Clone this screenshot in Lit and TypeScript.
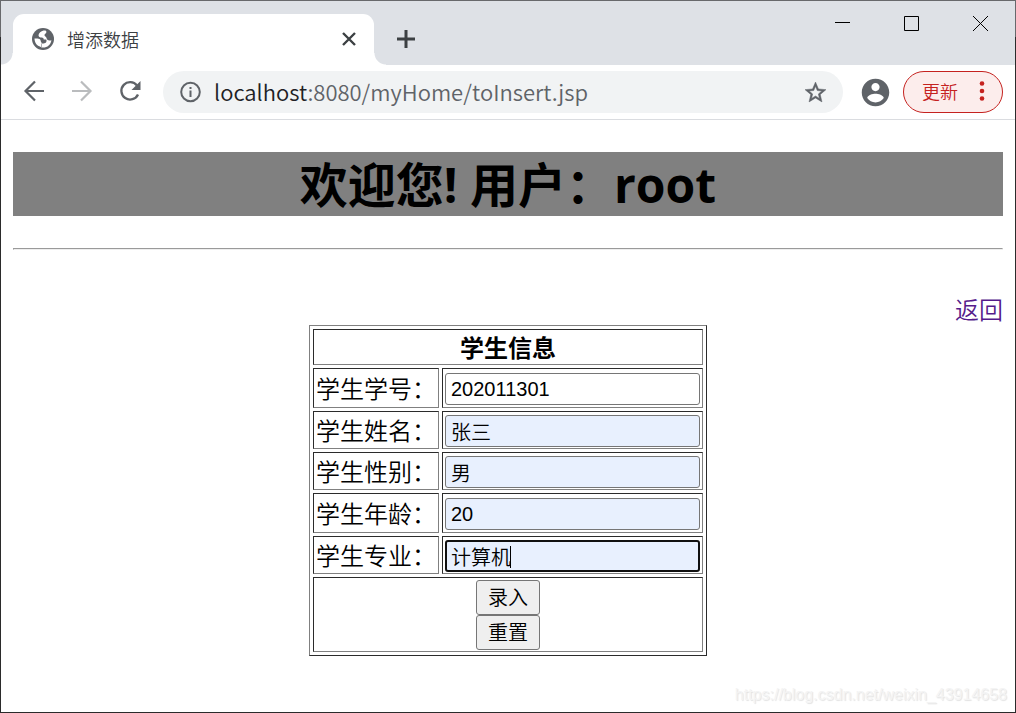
import { LitElement, html, css } from "lit";
import { customElement } from "lit/decorators.js";

interface Field {
  id: string;
  label: string;
  value: string;
  kind: string;
}

const FIELDS: Field[] = [
  { id: "sno", label: "学生学号：", value: "202011301", kind: "tall" },
  { id: "sname", label: "学生姓名：", value: "张三", kind: "filled" },
  { id: "ssex", label: "学生性别：", value: "男", kind: "filled" },
  { id: "sage", label: "学生年龄：", value: "20", kind: "tall filled" },
  { id: "smajor", label: "学生专业：", value: "计算机", kind: "filled active" },
];

@customElement("browser-chrome")
export class BrowserChrome extends LitElement {
  static styles = css`
    :host {
      display: block;
      font-family: "Open Sans", "Noto Sans CJK SC", sans-serif;
    }
    button {
      display: flex;
      align-items: center;
      justify-content: center;
      border: 0;
      margin: 0;
      padding: 0;
      background: none;
      color: #5f6368;
      font-family: inherit;
    }
    svg {
      display: block;
      fill: currentColor;
    }
    .strip {
      display: flex;
      height: 64px;
      background: #dee1e6;
    }
    .tab {
      display: flex;
      align-items: center;
      box-sizing: border-box;
      flex: 0 1 361px;
      height: 51px;
      margin: 13px 0 0 12px;
      padding: 0 16px 2px 18px;
      border-radius: 11px 11px 0 0;
      background: #fff;
      position: relative;
    }
    .tab::before,
    .tab::after {
      content: "";
      position: absolute;
      bottom: 0;
      width: 12px;
      height: 12px;
    }
    .tab::before {
      left: -12px;
      background: radial-gradient(circle at 0 0, #dee1e6 11px, #fff 12px);
    }
    .tab::after {
      right: -12px;
      background: radial-gradient(circle at 100% 0, #dee1e6 11px, #fff 12px);
    }
    .globe {
      color: #5f6368;
      margin-right: 12px;
    }
    .title {
      flex: 1;
      padding-top: 2px;
      font-size: 18px;
      font-weight: 350;
      line-height: 24px;
      color: #3c4043;
    }
    .dark {
      color: #3c4043;
    }
    .plus {
      margin: 13px 0 0 20px;
      width: 24px;
      height: 49px;
    }
    .window {
      display: flex;
      margin-left: auto;
      height: 45px;
    }
    .window button {
      width: 69px;
      color: #000;
    }
    .bar {
      display: flex;
      align-items: center;
      box-sizing: border-box;
      height: 55px;
      padding: 0 12px 0 20px;
      border-bottom: 1px solid #dadce0;
      background: #fff;
    }
    .nav {
      width: 26px;
      height: 26px;
      margin: 0 22px 2px 0;
    }
    .nav:nth-of-type(3) {
      margin-right: 20px;
    }
    .nav.off {
      color: #babcbe;
    }
    .omni {
      display: flex;
      align-items: center;
      box-sizing: border-box;
      flex: 1;
      height: 42px;
      padding: 0 15px;
      border-radius: 21px;
      background: #f1f3f4;
      color: #5f6368;
    }
    .url {
      flex: 1;
      margin-left: 11px;
      padding-bottom: 2px;
      font-family: "Noto Sans CJK SC", sans-serif;
      font-size: 22px;
      font-weight: 350;
      line-height: 30px;
      color: #5f6368;
      white-space: nowrap;
    }
    .host {
      color: #202124;
    }
    .avatar {
      margin: 0 11px 0 16px;
    }
    .update {
      box-sizing: border-box;
      width: 100px;
      height: 42px;
      gap: 14px;
      padding: 0 0 2px 8px;
      border: 1px solid #c5221f;
      border-radius: 21px;
      background: #fcedec;
      color: #c5221f;
      font-size: 18px;
      font-weight: 350;
    }
  `;

  render() {
    return html`
      <header>
        <div class="strip">
          <div class="tab">
            <svg class="globe" width="24" height="24" viewBox="0 0 24 24">
              <circle cx="12" cy="12" r="11"/>
              <path fill="#fff" d="M12.500 3.600c-2.400.8-5 2.600-5 4.600 0 1.700 1.500 2.300 3.200 2.300 1.300 0 2 .9 2 2.100h2.500c1 2-.3 3.900-2.500 3.900h-1.700c-.7 0-1 .6-1 1.200v2.600c5 1.300 9.800-1.900 10.400-7.100-1.400.5-3.100.5-4-.4-1-.9-.6-2.500-2-3.300-1.300-.8-1.200-2.500.2-3.100 1-.4 1.300-1.900-.1-2.800zM3.500 11.600c1.600 0 4.500-.3 5.700 1 .7.900.3 2.100 1.300 2.800v4.700c-4.200-.7-7-4.100-7-8.500z"/>
            </svg>
            <span class="title">增添数据</span>
            <button class="dark" aria-label="关闭标签页">
              <svg width="18" height="18" viewBox="0 0 18 18"><path d="M3 3l12 12M15 3L3 15" stroke="currentColor" stroke-width="2.400"/></svg>
            </button>
          </div>
          <button class="plus dark" aria-label="新标签页">
            <svg width="24" height="24" viewBox="0 0 24 24"><path d="M12 3v18M3 12h18" stroke="currentColor" stroke-width="3"/></svg>
          </button>
          <div class="window">
            <button aria-label="最小化"><svg width="15" height="15" viewBox="0 0 15 15"><path d="M0 6h15v1H0z"/></svg></button>
            <button aria-label="最大化"><svg width="15" height="15" viewBox="0 0 15 15"><path d="M.5.5h14v14H.5z" fill="none" stroke="currentColor"/></svg></button>
            <button aria-label="关闭"><svg width="15" height="15" viewBox="0 0 15 15"><path d="M0 0l15 15M15 0L0 15" stroke="currentColor"/></svg></button>
          </div>
        </div>
        <div class="bar">
          <button class="nav" aria-label="后退"><svg width="26" height="26" viewBox="0 0 26 26"><path d="M23 13H5M14 3.500L4.500 13l9.500 9.500" fill="none" stroke="currentColor" stroke-width="2.200"/></svg></button>
          <button class="nav off" aria-label="前进"><svg width="26" height="26" viewBox="0 0 26 26"><path d="M3 13h18M12 3.500l9.500 9.500-9.500 9.500" fill="none" stroke="currentColor" stroke-width="2.200"/></svg></button>
          <button class="nav" aria-label="刷新"><svg width="26" height="26" viewBox="0 0 26 26"><path d="M21 16.500A8.700 8.700 0 1 1 20 7.500" fill="none" stroke="currentColor" stroke-width="2.300"/><path d="M23.500 3v9h-9z"/></svg></button>
          <div class="omni">
            <svg width="25" height="24" viewBox="0 0 24 24"><circle cx="12" cy="12" r="9.300" fill="none" stroke="currentColor" stroke-width="2"/><path d="M11 10.500h2V17h-2zM11 7h2v2h-2z"/></svg>
            <span class="url"><span class="host">localhost</span>:8080/myHome/toInsert.jsp</span>
            <button aria-label="为此标签页添加书签"><svg width="25" height="25" viewBox="0 0 24 24"><path stroke="currentColor" stroke-width=".5" d="M22 9.240l-7.190-.62L12 2 9.190 8.630 2 9.240l5.460 4.730L5.820 21 12 17.270 18.180 21l-1.630-7.030L22 9.240zM12 15.400l-3.760 2.270 1-4.280-3.320-2.880 4.380-.38L12 6.100l1.710 4.040 4.380.38-3.320 2.880 1 4.280L12 15.400z"/></svg></button>
          </div>
          <button class="avatar" aria-label="用户"><svg width="33" height="33" viewBox="0 0 24 24"><path d="M12 2C6.480 2 2 6.480 2 12s4.480 10 10 10 10-4.480 10-10S17.520 2 12 2zm0 3c1.660 0 3 1.340 3 3s-1.340 3-3 3-3-1.340-3-3 1.340-3 3-3zm0 14.200c-2.500 0-4.710-1.280-6-3.220.03-1.990 4-3.080 6-3.080 1.990 0 5.970 1.090 6 3.080-1.290 1.940-3.500 3.220-6 3.220z"/></svg></button>
          <button class="update">更新<svg width="20" height="24" viewBox="0 0 20 24"><circle cx="10" cy="4.500" r="2.300"/><circle cx="10" cy="12" r="2.300"/><circle cx="10" cy="19.500" r="2.300"/></svg></button>
        </div>
      </header>
    `;
  }
}

@customElement("app-root")
export class AppRoot extends LitElement {
  static styles = css`
    :host {
      display: block;
      box-sizing: border-box;
      min-height: 100vh;
      border: 1px solid #2b2b2b;
      border-image: linear-gradient(#68696c 37px, #2b2b2b 37px) 1;
      background: #fff;
      color: #000;
      font-family: "Open Sans", "Noto Sans CJK SC", sans-serif;
      font-size: 24px;
      font-weight: 350;
      position: relative;
    }
    main {
      padding: 32px 12px 0;
    }
    h1 {
      margin: 0 0 32px;
      padding-top: 2px;
      background: #808080;
      font-size: 48px;
      font-weight: 700;
      line-height: 62px;
      text-align: center;
    }
    hr {
      margin: 0 0 48px;
      border: 1px solid;
      border-color: #9a9a9a #eee #eee #9a9a9a;
    }
    .back {
      padding-bottom: 3px;
      text-align: right;
      line-height: 24px;
    }
    .back a {
      color: #551a8b;
      text-decoration: none;
    }
    table {
      width: 398px;
      margin: 0 auto;
      border: 1px solid;
      border-color: #808080 #2b2b2b #2b2b2b #808080;
      border-collapse: separate;
      border-spacing: 3px;
      line-height: 32px;
    }
    th,
    td {
      box-sizing: border-box;
      height: 38px;
      padding: 3px 2px 1px;
      border: 1px solid;
      border-color: #2b2b2b #808080 #808080 #2b2b2b;
      text-align: left;
    }
    th {
      font-weight: 350;
      white-space: nowrap;
    }
    .caption {
      height: 36px;
      padding: 2px 2px 0;
      font-weight: 700;
      text-align: center;
    }
    .name {
      width: 126px;
    }
    .tall > * {
      height: 40px;
    }
    input {
      display: block;
      box-sizing: border-box;
      width: 100%;
      height: 32px;
      margin: 0;
      padding: 0 5px;
      border: 1px solid #767676;
      border-radius: 3px;
      background: #fff;
      color: #000;
      font-family: "Liberation Sans", "Noto Sans CJK SC", sans-serif;
      font-size: 20px;
      font-weight: 350;
    }
    .filled input {
      background: #e8f0fe;
    }
    .active input {
      padding: 0 4px;
      border: 2px solid #101010;
      background: linear-gradient(#000, #000) 63px 4px / 1px 22px no-repeat #e8f0fe;
    }
    .actions {
      padding: 2px 2px 1px;
    }
    .actions button {
      display: block;
      box-sizing: border-box;
      width: 64px;
      height: 35px;
      margin: 0 auto;
      padding: 0;
      border: 1px solid #767676;
      border-radius: 3px;
      background: #efefef;
      color: #000;
      font-family: inherit;
      font-size: 20px;
      font-weight: 350;
      line-height: 32px;
    }
    .mark {
      position: absolute;
      right: 8px;
      bottom: 7px;
      color: #f4f4f4;
      font-family: "Liberation Sans", sans-serif;
      font-size: 16px;
      line-height: 20px;
      text-shadow: 1px 1px 1px #e2e2e2;
    }
  `;

  render() {
    return html`
      <browser-chrome></browser-chrome>
      <main>
        <h1>欢迎您! 用户：root</h1>
        <hr />
        <div class="back"><a href="#">返回</a></div>
        <form>
          <table>
            <tr><th class="caption" colspan="2">学生信息</th></tr>
            ${FIELDS.map(
              (f) => html`
                <tr class=${f.kind}>
                  <th class="name" scope="row"><label for=${f.id}>${f.label}</label></th>
                  <td><input id=${f.id} type="text" .value=${f.value} /></td>
                </tr>
              `
            )}
            <tr>
              <td class="actions" colspan="2">
                <button type="submit">录入</button>
                <button type="reset">重置</button>
              </td>
            </tr>
          </table>
        </form>
      </main>
      <div class="mark">https://blog.csdn.net/weixin_43914658</div>
    `;
  }
}
